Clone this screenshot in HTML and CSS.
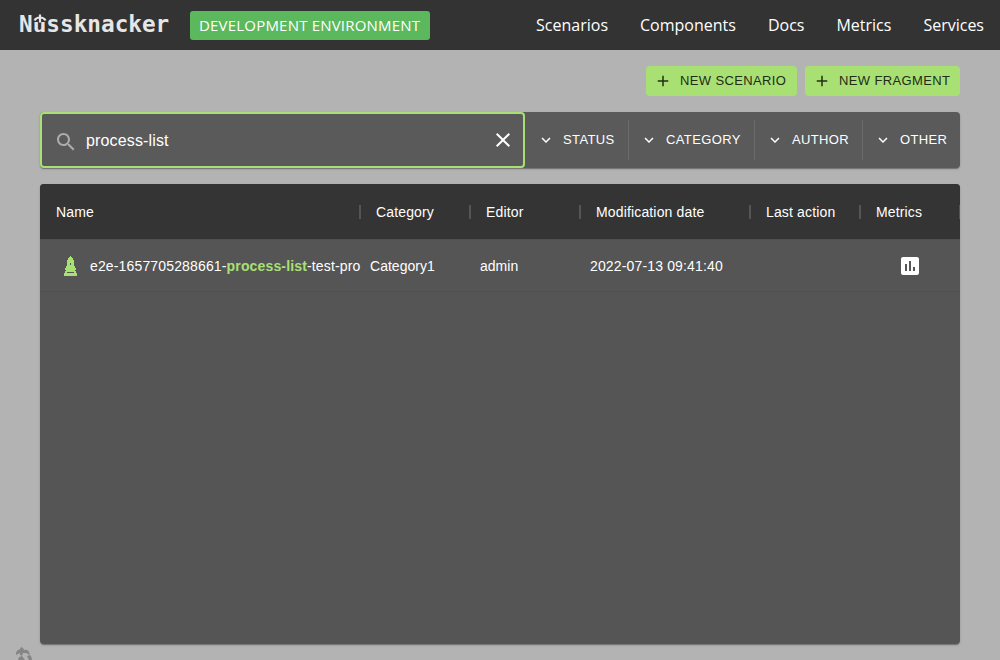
FILE: index.html
```html
<!DOCTYPE html>
<html lang="en">
<head>
<meta charset="utf-8">
<title>Nussknacker</title>
<link rel="stylesheet" href="styles.css">
</head>
<body>
<header class="topbar">
  <a class="logo"><span>N</span><span class="logo-u"><span class="logo-bowl">u</span><svg class="logo-hat" width="14" height="10" viewBox="0 0 14 10"><path d="M1.500 6.500Q3 3.500 7 3.500Q11 3.500 12.500 6.500M7 .5V8.500" fill="none" stroke="#e6e6e6" stroke-width="2.200"/></svg></span><span>ssknacker</span></a>
  <span class="env">DEVELOPMENT ENVIRONMENT</span>
  <nav class="nav"><a>Scenarios</a><a>Components</a><a>Docs</a><a>Metrics</a><a>Services</a></nav>
</header>
<main class="page">
  <div class="actions">
    <button class="btn btn-scenario"><svg width="18" height="18" viewBox="0 0 24 24"><path d="M19 13h-6v6h-2v-6H5v-2h6V5h2v6h6v2z"/></svg><span>NEW SCENARIO</span></button>
    <button class="btn btn-fragment"><svg width="18" height="18" viewBox="0 0 24 24"><path d="M19 13h-6v6h-2v-6H5v-2h6V5h2v6h6v2z"/></svg><span>NEW FRAGMENT</span></button>
  </div>
  <section class="filters">
    <div class="search">
      <svg class="search-icon" width="24" height="24" viewBox="0 0 24 24"><path d="M15.5 14h-.79l-.28-.27C15.41 12.59 16 11.11 16 9.5 16 5.91 13.09 3 9.5 3S3 5.91 3 9.5 5.91 16 9.5 16c1.61 0 3.09-.59 4.23-1.57l.27.28v.79l5 4.99L20.49 19l-4.99-5zm-6 0C7.01 14 5 11.99 5 9.5S7.01 5 9.5 5 14 7.01 14 9.5 11.99 14 9.5 14z"/></svg>
      <span class="search-text">process-list</span>
      <svg class="clear" width="24" height="24" viewBox="0 0 24 24"><path d="M19 6.41 17.59 5 12 10.59 6.41 5 5 6.41 10.59 12 5 17.59 6.41 19 12 13.41 17.59 19 19 17.59 13.41 12z"/></svg>
    </div>
    <div class="filter filter-status"><svg width="18" height="18" viewBox="0 0 24 24"><path d="M7.41 8.59 12 13.17l4.59-4.58L18 10l-6 6-6-6 1.41-1.41z"/></svg><span>STATUS</span></div>
    <div class="filter filter-category"><svg width="18" height="18" viewBox="0 0 24 24"><path d="M7.41 8.59 12 13.17l4.59-4.58L18 10l-6 6-6-6 1.41-1.41z"/></svg><span>CATEGORY</span></div>
    <div class="filter filter-author"><svg width="18" height="18" viewBox="0 0 24 24"><path d="M7.41 8.59 12 13.17l4.59-4.58L18 10l-6 6-6-6 1.41-1.41z"/></svg><span>AUTHOR</span></div>
    <div class="filter filter-other"><svg width="18" height="18" viewBox="0 0 24 24"><path d="M7.41 8.59 12 13.17l4.59-4.58L18 10l-6 6-6-6 1.41-1.41z"/></svg><span>OTHER</span></div>
  </section>
  <section class="table">
    <div class="row head"><div>Name</div><div>Category</div><div>Editor</div><div>Modification date</div><div>Last action</div><div>Metrics</div></div>
    <div class="row data">
      <div class="name"><svg class="piece" width="13" height="20" viewBox="0 0 13 20"><path fill-rule="evenodd" d="M6 0H7V1H8V2H9V4H10V10H11V12H12V14H11V15H12V17H13V20H0V17H1V15H2V14H1V12H2V10H3V4H4V2H5V1H6ZM6 7V9H7V7ZM3 16H10V17H3Z"/></svg><span>e2e-1657705288661-<b>process-list</b>-test-pro</span></div>
      <div class="category">Category1</div><div class="editor">admin</div><div>2022-07-13 09:41:40</div><div></div>
      <div class="metric"><svg width="24" height="24" viewBox="0 0 24 24"><path fill-rule="evenodd" d="M19 3H5C3.900 3 3 3.900 3 5V19C3 20.100 3.900 21 5 21H19C20.100 21 21 20.100 21 19V5C21 3.900 20.100 3 19 3ZM9 17H7V10H9ZM13 17H11V7H13ZM17 17H15V13H17Z"/></svg></div>
    </div>
  </section>
</main>
<svg class="watermark" width="18" height="13" viewBox="0 0 18 13"><path d="M5 2L6 0L8 1L9 3Q14 2 15 8L11 6L8 6L7 9L5 8V6L1 8Q0 4 5 2ZM12 9L15 8Q17 10 17 13H14ZM4 10L7 9L10 13H3Z"/></svg>
</body>
</html>
```
FILE: styles.css
```css
* { box-sizing: border-box; }
body {
  margin: 0;
  height: 660px;
  overflow: hidden;
  background: #b3b3b3;
  color: #fff;
  font: 14px "Liberation Sans", Arial, sans-serif;
}
.topbar {
  display: flex;
  align-items: center;
  height: 50px;
  padding: 0 16px 0 19px;
  background: #333;
}
.logo {
  display: flex;
  width: 171px;
  padding-bottom: 2px;
  color: #e6e6e6;
  font: bold 22.7px/28px "DejaVu Sans Mono", monospace;
}
.logo-u { position: relative; }
.logo-bowl { display: inline-block; transform: scaleY(.78); transform-origin: 50% 22px; }
.logo-hat { position: absolute; left: 0; top: 4px; }
.env {
  height: 29px;
  width: 240px;
  padding: 0 9px;
  border-radius: 3px;
  background: #5cb85c;
  font: 15px/28px "Open Sans", sans-serif;
  letter-spacing: 0.2px;
  white-space: nowrap;
}
.nav {
  display: flex;
  gap: 32px;
  margin-left: auto;
  font: 16px/22px "Open Sans", sans-serif;
}
.page { padding: 16px 40px; }
.actions {
  display: flex;
  justify-content: flex-end;
  gap: 8px;
  margin-bottom: 16px;
}
.btn {
  display: flex;
  align-items: center;
  gap: 8px;
  height: 30px;
  padding: 0 8px;
  border: 0;
  border-radius: 4px;
  background: #a9e074;
  color: #222d17;
  font: 13px/22px "Liberation Sans", Arial, sans-serif;
  letter-spacing: 0.37px;
  white-space: nowrap;
}
.btn-scenario { width: 151px; }
.btn-fragment { width: 155px; }
.btn svg { flex: none; fill: #222d17; }
.filters, .table {
  border-radius: 4px;
  box-shadow: 0 2px 1px -1px rgba(0,0,0,.2), 0 1px 1px rgba(0,0,0,.14), 0 1px 3px rgba(0,0,0,.12);
}
.filters {
  display: flex;
  align-items: center;
  height: 56px;
  margin-bottom: 16px;
  background: #5a5a5a;
}
.search {
  display: flex;
  align-items: center;
  width: 485px;
  height: 56px;
  padding: 0 8px 0 12px;
  border: 2px solid #a9e074;
  border-radius: 4px;
  font-size: 16px;
  letter-spacing: 0.15px;
}
.search-icon { fill: #acacac; margin-top: 3px; }
.search-text { flex: 1; margin-left: 8px; padding-top: 2px; }
.clear { fill: #fff; }
.filter {
  display: flex;
  align-items: center;
  gap: 8px;
  height: 40px;
  padding-left: 12px;
  font-size: 13px;
  letter-spacing: 0.37px;
}
.filter span { padding-bottom: 2px; }
.filter + .filter { border-left: 1px solid #6b6b6b; padding-left: 11px; }
.filter svg { fill: #fff; }
.filter-status { width: 103px; }
.filter-category { width: 126px; }
.filter-author { width: 108px; }
.filter-other { width: 98px; }
.table {
  height: 460px;
  overflow: hidden;
  background: #555;
}
.row {
  display: grid;
  grid-template-columns: 320px 110px 110px 170px 110px 100px;
  align-items: center;
}
.head { height: 55px; padding-top: 1px; background: #343434; letter-spacing: 0.15px; }
.head > div { padding-left: 16px; line-height: 14px; border-right: 2px solid #555; position: relative; left: 1px; text-indent: -1px; }
.data { height: 53px; border-top: 1px solid #4f4f4f; border-bottom: 1px solid #4f4f4f; letter-spacing: 0.15px; }
.data > div { padding-left: 10px; white-space: nowrap; }
.data > .category, .data > .editor { letter-spacing: 0.02px; }
.data > .name { display: flex; align-items: center; gap: 13px; padding-left: 24px; }
.name b { color: #a9e074; }
.piece { flex: none; fill: #a9e074; }
.data > .metric { display: flex; justify-content: center; padding: 0; }
.metric svg { fill: #fff; }
.watermark { position: absolute; left: 15px; top: 647px; fill: #858585; }
```
